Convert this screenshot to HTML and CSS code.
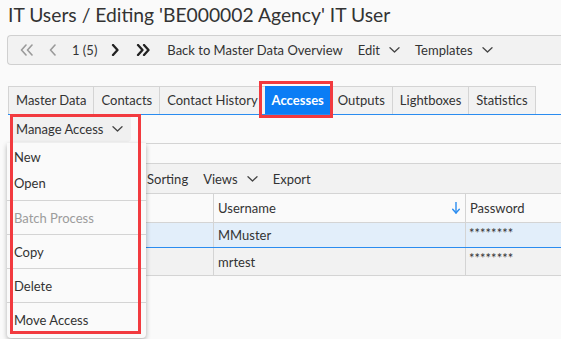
FILE: index.html
```html
<!DOCTYPE html>
<html lang="en">
<head>
    <meta charset="UTF-8">
    <title>IT Users - Editing</title>
    <link rel="stylesheet" href="styles.css">
</head>
<body>
    <h1 class="title">IT Users / Editing 'BE000002 Agency' IT User</h1>

    <div class="toolbar">
        <span class="nav-btn muted">
            <svg width="14" height="12" viewBox="0 0 14 12"><polyline points="6,1 1.5,6 6,11"/><polyline points="12,1 7.5,6 12,11"/></svg>
        </span>
        <span class="nav-btn muted">
            <svg width="8" height="12" viewBox="0 0 8 12"><polyline points="6,1 1.5,6 6,11"/></svg>
        </span>
        <span class="pager">1 (5)</span>
        <span class="nav-btn strong">
            <svg width="8" height="12" viewBox="0 0 8 12"><polyline points="2,1 6.5,6 2,11"/></svg>
        </span>
        <span class="nav-btn strong">
            <svg width="14" height="12" viewBox="0 0 14 12"><polyline points="2,1 6.5,6 2,11"/><polyline points="8,1 12.5,6 8,11"/></svg>
        </span>
        <span class="tool-item">Back to Master Data Overview</span>
        <span class="tool-item">Edit <svg class="caret" width="11" height="6" viewBox="0 0 11 6"><polyline points="1,0.8 5.5,5 10,0.8"/></svg></span>
        <span class="tool-item">Templates <svg class="caret" width="11" height="6" viewBox="0 0 11 6"><polyline points="1,0.8 5.5,5 10,0.8"/></svg></span>
    </div>

    <ul class="tabs">
        <li>Master Data</li>
        <li>Contacts</li>
        <li>Contact History</li>
        <li class="active">Accesses</li>
        <li>Outputs</li>
        <li>Lightboxes</li>
        <li>Statistics</li>
    </ul>

    <div class="panel">
        <div class="action-bar">
            <span class="menu-btn">Manage Access <svg class="caret" width="11" height="6" viewBox="0 0 11 6"><polyline points="1,0.8 5.5,5 10,0.8"/></svg></span>
        </div>
        <div class="filter-strip"></div>
        <div class="grid-toolbar">
            <span class="tool-item">Sorting</span>
            <span class="tool-item">Views <svg class="caret" width="11" height="6" viewBox="0 0 11 6"><polyline points="1,0.8 5.5,5 10,0.8"/></svg></span>
            <span class="tool-item">Export</span>
        </div>

        <div class="grid">
            <div class="grid-row head">
                <div class="cell"></div>
                <div class="cell sorted">
                    <span>Username</span>
                    <svg class="sort" width="8" height="12" viewBox="0 0 8 12"><line x1="4" y1="0.5" x2="4" y2="11"/><polyline points="0.7,7.3 4,11 7.3,7.3"/></svg>
                </div>
                <div class="cell">Password</div>
            </div>
            <div class="grid-row selected">
                <div class="cell"></div>
                <div class="cell">MMuster</div>
                <div class="cell secret">********</div>
            </div>
            <div class="grid-row">
                <div class="cell"></div>
                <div class="cell">mrtest</div>
                <div class="cell secret">********</div>
            </div>
        </div>

        <div class="dropdown">
            <div class="menu-group first">
                <div class="menu-item">New</div>
                <div class="menu-item">Open</div>
            </div>
            <div class="menu-group">
                <div class="menu-item disabled">Batch Process</div>
            </div>
            <div class="menu-group">
                <div class="menu-item">Copy</div>
            </div>
            <div class="menu-group">
                <div class="menu-item">Delete</div>
            </div>
            <div class="menu-group">
                <div class="menu-item">Move Access</div>
            </div>
        </div>
    </div>

    <!-- annotation frames -->
    <div class="mark mark-tab"></div>
    <div class="mark mark-menu"></div>
</body>
</html>
```

FILE: styles.css
```css
html, body {
    min-height: 100vh;
}
body {
    font-family: Lato, "Open Sans", sans-serif;
    font-size: 13px;
    line-height: 16px;
    color: #333;
    background-color: #fafafa;
    margin: 0;
    padding: 0;
}
.title {
    font-size: 19.3px;
    line-height: 24px;
    font-weight: normal;
    margin: 0;
    padding: 3px 8px 0;
    height: 32px;
    color: #333;
}
.toolbar {
    display: flex;
    align-items: center;
    height: 28px;
    margin-left: 7px;
    background-color: #f2f2f2;
    border: 1px solid #d0d0d0;
    border-right: none;
    border-radius: 4px 0 0 4px;
    padding-left: 12px;
}
.toolbar svg,
.panel svg {
    fill: none;
    stroke-linecap: round;
    stroke-linejoin: round;
}
.nav-btn {
    display: flex;
    align-items: center;
    margin-right: 15px;
}
.nav-btn.muted svg {
    stroke: #9a9a9a;
    stroke-width: 1.6;
}
.nav-btn.strong {
    margin-right: 17px;
}
.nav-btn.strong svg {
    stroke: #222;
    stroke-width: 2.3;
}
.pager {
    margin-right: 14px;
}
.tool-item {
    display: flex;
    align-items: center;
    margin-right: 15px;
    white-space: nowrap;
}
.toolbar .tool-item:first-of-type {
    margin-left: 3px;
}
.caret {
    stroke: #444;
    stroke-width: 1.3;
    margin-left: 9px;
}
.tabs {
    list-style-type: none;
    display: flex;
    margin: 21px 0 0 8px;
    padding: 0;
    border-bottom: 1px solid #2a8cf0;
}
.tabs li {
    height: 27px;
    line-height: 27px;
    padding: 0 7px;
    background-color: #f2f2f2;
    border-top: 1px solid #d4d4d4;
    border-left: 1px solid #d4d4d4;
    white-space: nowrap;
}
.tabs li:last-child {
    border-right: 1px solid #d4d4d4;
}
.tabs li.active {
    background-color: #0a7df5;
    border-color: #0a7df5;
    color: white;
    font-weight: bold;
    padding: 0 6px;
}
.tabs li.active + li {
    border-left-color: #0a7df5;
}
.panel {
    position: relative;
    margin-left: 8px;
}
.action-bar {
    height: 28px;
    border-bottom: 1px solid #d4d4d4;
}
.menu-btn {
    display: inline-flex;
    align-items: center;
    height: 27px;
    margin-left: 2px;
    padding: 0 8px 0 6px;
    background-color: #f0f0f0;
    border-radius: 4px;
}
.filter-strip {
    height: 19px;
    border-bottom: 1px solid #d4d4d4;
}
.grid-toolbar {
    display: flex;
    align-items: center;
    height: 29px;
    padding-left: 139px;
    background-color: #f2f2f2;
    border-bottom: 1px solid #d4d4d4;
}
.grid-row {
    display: grid;
    grid-template-columns: 205px 252px 1fr;
    box-sizing: border-box;
    height: 28px;
    background-color: #f2f2f2;
    border-bottom: 1px solid #d4d4d4;
}
.grid-row.head {
    height: 29px;
    background-color: #fafafa;
}
.grid-row.selected {
    height: 25px;
    background-color: #e2eefa;
    border-bottom-color: #2a8cf0;
}
.cell {
    display: flex;
    align-items: center;
    padding: 0 4px;
    border-left: 1px solid #d4d4d4;
}
.cell:first-child {
    border-left: none;
}
.cell.sorted {
    justify-content: space-between;
}
.sort {
    stroke: #2a8cf0;
    stroke-width: 1.4;
    margin-right: 1px;
}
.cell.secret {
    align-items: flex-start;
    padding-top: 4px;
    padding-left: 3px;
    font-size: 13px;
    line-height: 13px;
}
.dropdown {
    position: absolute;
    top: 28px;
    left: -1px;
    width: 139px;
    background-color: #fafafa;
    border-radius: 0 0 4px 4px;
    box-shadow: 0 2px 5px rgba(0, 0, 0, 0.3);
    padding-bottom: 2px;
    z-index: 2;
}
.menu-group {
    padding: 4px 0 3px;
    border-top: 1px solid #d4d4d4;
}
.menu-group.first {
    padding-top: 1px;
    padding-bottom: 4px;
    border-top: none;
}
.menu-item {
    height: 26px;
    line-height: 26px;
    padding-left: 7px;
}
.menu-item.disabled {
    color: #9c9c9c;
}
.mark {
    position: absolute;
    border: 3px solid #f23a3f;
    box-sizing: border-box;
    z-index: 3;
}
.mark-tab {
    left: 259px;
    top: 81px;
    width: 74px;
    height: 37px;
}
.mark-menu {
    left: 10px;
    top: 114px;
    width: 131px;
    height: 220px;
}
```
